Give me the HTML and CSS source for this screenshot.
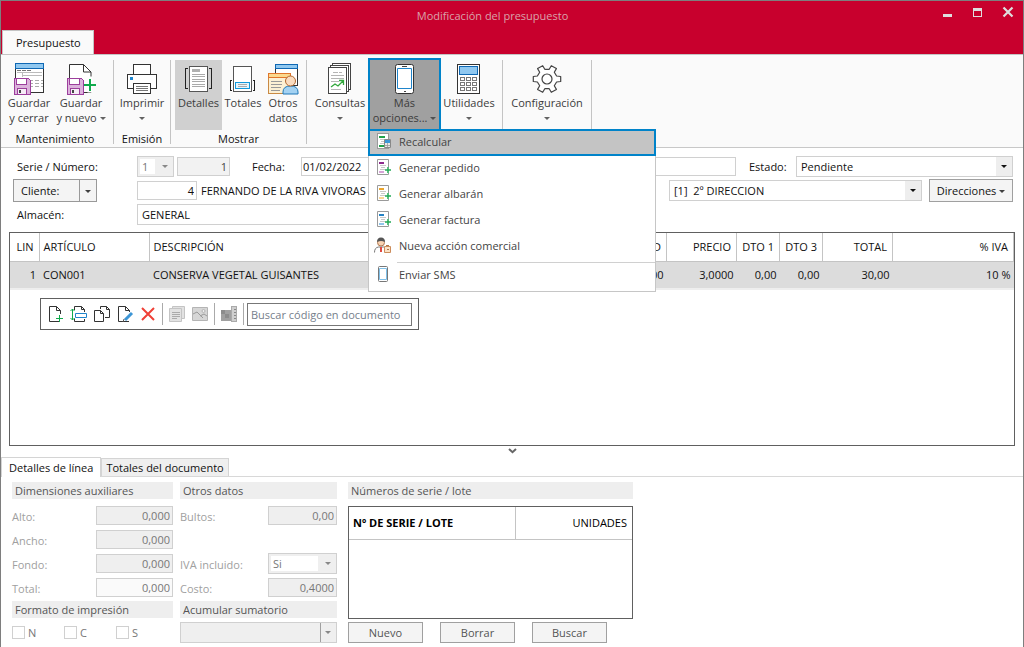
FILE: index.html
```html
<!DOCTYPE html>
<html lang="es">
<head>
<meta charset="utf-8">
<title>Modificación del presupuesto</title>
<link rel="stylesheet" href="styles.css">
</head>
<body>
<svg class="defs" width="0" height="0" aria-hidden="true">
  <defs>
    <g id="floppy">
      <path d="M1 1h14l2 2v14H1z" fill="#dcb3dc" stroke="#9c3f9c"/>
      <path d="M3.500 1h10v6h-10z" fill="#fff" stroke="#9c3f9c"/>
      <path d="M4 11h9v6H4z" fill="#f6ecf6" stroke="#9c3f9c"/>
      <path d="M6 13h2v3H6z" fill="#444"/>
    </g>
    <g id="doc">
      <path d="M1.500 .500h11v15h-11z" fill="#fff" stroke="#9a9a9a"/>
      <path d="M4 6.500h6M5 8.500h5M4 10.500h6" stroke="#c8c8c8" fill="none"/>
    </g>
    <g id="plus"><path d="M9 8h6v6H9z" fill="#fff"/><path d="M12 8v6M9 11h6" stroke="#22a955" stroke-width="1.500" fill="none"/></g>
  </defs>
</svg>
<div class="window">
  <header class="titlebar">
    <h1 class="title">Modificación del presupuesto</h1>
    <div class="winbtns">
      <button type="button" aria-label="Minimizar"><svg width="12" height="12" shape-rendering="crispEdges"><path d="M1 8h9v3H1z" fill="#dedede"/></svg></button>
      <button type="button" aria-label="Maximizar"><svg width="12" height="12" shape-rendering="crispEdges"><path d="M1 2h9v9H1zM2 5v5h7V5z" fill="#dedede" fill-rule="evenodd"/></svg></button>
      <button type="button" aria-label="Cerrar"><svg width="12" height="12"><path d="M1.500 1.500l9 9M10.500 1.500l-9 9" stroke="#dedede" stroke-width="2.200"/></svg></button>
    </div>
  </header>
  <nav class="apptabs"><button type="button" class="apptab">Presupuesto</button></nav>

  <section class="ribbon">
    <div class="group first">
      <div class="tools">
        <button type="button" class="tool w52">
          <svg width="32" height="32" shape-rendering="crispEdges">
            <path d="M2.500 6v23.500h28V6" fill="#fff" stroke="#333"/>
            <path d="M2.500.500h28v5h-28z" fill="#90c8f0" stroke="#0f68b4"/>
            <path d="M4 7.500h4M9 7.500h4M14 7.500h4" stroke="#777"/><path d="M4 9.500h25M9.500 10v4M10 12.500h19" stroke="#bbb"/>
            <path d="M16 17.500h14M16 20.500h14M16 23.500h14" stroke="#aaa" stroke-dasharray="4 2"/>
            <use href="#floppy" y="14"/>
          </svg><span>Guardar<br>y cerrar</span></button>
        <button type="button" class="tool w52">
          <svg width="32" height="32">
            <path d="M4.500 30V1.500h14l7.500 7.500v20.500H17" fill="#fff" stroke="#333"/>
            <path d="M18.500 1.500V9H26" fill="none" stroke="#333"/>
            <use href="#floppy" x="1" y="14" shape-rendering="crispEdges"/>
            <path d="M24 15h2v13h-2z" fill="#fff" stroke="#fff" stroke-width="3"/>
            <path d="M19 22h12M25 16v12" stroke="#10aa4c" stroke-width="2"/>
          </svg><span>Guardar<br>y nuevo <i class="caret"></i></span></button>
      </div>
      <h2 class="glabel">Mantenimiento</h2>
    </div>
    <div class="group narrow">
      <div class="tools">
        <button type="button" class="tool w52">
          <svg width="32" height="32" shape-rendering="crispEdges">
            <path d="M7.500 11V1.500h17V11M7.500 25.500h-6v-14h29v14h-6" fill="#fff" stroke="#333"/>
            <path d="M7.500 20.500h17v10h-17z" fill="#fff" stroke="#333"/>
            <path d="M10 23.500h12M10 25.500h12M10 27.500h12" stroke="#777"/>
            <path d="M4 14h3v3H4z" fill="#1e86cf"/>
          </svg><span>Imprimir<br><i class="caret"></i></span></button>
      </div>
      <h2 class="glabel">Emisión</h2>
    </div>
    <div class="group mid">
      <div class="tools">
        <button type="button" class="tool w47 pressed">
          <svg width="32" height="32" shape-rendering="crispEdges">
            <path d="M6.500 3.500h18v25h-18z" fill="#fff" stroke="#555"/>
            <path d="M9 6h8v3H9z" fill="#b0b0b0"/>
            <path d="M9 11.500h13M9 13.500h13M9 16.500h13M9 18.500h13M9 21.500h13M9 23.500h13" stroke="#aaa"/>
            <path d="M5 5.500H2.500v20H5M26 5.500h2.500v20H26" fill="none" stroke="#222"/>
          </svg><span>Detalles</span></button>
        <button type="button" class="tool w42">
          <svg width="32" height="32" shape-rendering="crispEdges">
            <path d="M6.500 3.500h18v25h-18z" fill="#fff" stroke="#555"/>
            <path d="M8.500 19.500h14v6h-14z" fill="#e4f4fc" stroke="#1198db"/>
            <path d="M11 21.500h9M11 23.500h9" stroke="#aaa"/>
            <path d="M5 17.500H3.500v10H5M26 17.500h1.500v10H26" fill="none" stroke="#222"/>
          </svg><span>Totales</span></button>
        <button type="button" class="tool w38">
          <svg width="32" height="32">
            <g shape-rendering="crispEdges"><path d="M8.500 5v17.500h22V5" fill="#fff" stroke="#333"/><path d="M8.500 1.500h22v4h-22z" fill="#90c8f0" stroke="#0f68b4"/>
            <path d="M1.500 14v16.500h22V14" fill="#fcf0d4" stroke="#c98a44"/><path d="M1.500 10.500h22v4h-22z" fill="#fbd98e" stroke="#e0762b"/>
            <path d="M4 18.500h11M4 21.500h11M4 24.500h10M4 27.500h9" stroke="#999"/></g>
            <path d="M16 31v-2q0-6 7.500-6t7.500 6v2z" fill="#a4d2f2" stroke="#2079b8"/>
            <circle cx="23.500" cy="18" r="5" fill="#fadcc0" stroke="#b2682f"/>
          </svg><span>Otros<br>datos</span></button>
      </div>
      <h2 class="glabel">Mostrar</h2>
    </div>
    <div class="group">
      <div class="tools">
        <button type="button" class="tool w56">
          <svg width="32" height="32">
            <g fill="#fff" stroke="#444" shape-rendering="crispEdges"><path d="M8.500.500h18v26h-18z"/><path d="M6.500 2.500h18v26h-18z"/><path d="M4.500 4.500h18v26h-18z"/>
            <path d="M9 9.500h5M15 9.500h3M7 12.500h13M7 15.500h13M7 18.500h8M7 26.500h10" stroke="#b5b5b5"/></g>
            <path d="M7 24l4-3 3 2 5-5M15 17.500h4.500V22" fill="none" stroke="#32a83c" stroke-width="1.300"/>
          </svg><span>Consultas<br><i class="caret"></i></span></button>
        <div class="dropdown">
          <button type="button" class="tool open" aria-expanded="true">
            <svg width="32" height="32">
              <rect x="6.500" y="1.500" width="18" height="29" rx="2" fill="#fff" stroke="#333"/>
              <path d="M8.500 5.500h14v20h-14z" fill="#fff" stroke="#2085cb"/>
              <path d="M13 3.500h5M15 28.500h2" stroke="#444"/>
            </svg><span>Más<br>opciones... <i class="caret"></i></span></button>
          <ul class="menu">
            <li><button type="button" class="item current">
              <svg width="17" height="17"><use href="#doc" shape-rendering="crispEdges"/><path d="M3 3h6v2H3zM3 12h5v2H3z" fill="#22a34a"/><path d="M8.500 6.500h6v8h-6z" fill="#e8e8e8" stroke="#888"/><path d="M9 7h5v3H9z" fill="#3c97d6"/><path d="M11.500 10v4M9 12.500h5" stroke="#999" stroke-width=".8"/></svg>Recalcular</button></li>
            <li><button type="button" class="item"><svg width="17" height="17"><use href="#doc"/><path d="M3 3h5v2H3z" fill="#8d2a8d"/><path d="M3 12h5v2H3z" fill="#d7a3d7"/><use href="#plus"/></svg>Generar pedido</button></li>
            <li><button type="button" class="item"><svg width="17" height="17"><use href="#doc"/><path d="M3 3h5v2H3z" fill="#eba52d"/><path d="M3 12h5v2H3z" fill="#f8d696"/><use href="#plus"/></svg>Generar albarán</button></li>
            <li><button type="button" class="item"><svg width="17" height="17"><use href="#doc"/><path d="M3 3h5v2H3z" fill="#2482c4"/><path d="M3 12h5v2H3z" fill="#90c5ea"/><use href="#plus"/></svg>Generar factura</button></li>
            <li><button type="button" class="item"><svg class="person" width="19" height="17"><path d="M.500 15.500q0-5 4-5.500h5q3 .500 3 3" fill="#fff" stroke="#777"/><path d="M6 10h2v5H6z" fill="#e04a43"/><circle cx="7" cy="5.500" r="3.500" fill="#f8d2b2" stroke="#b17a52"/><path d="M3 5q0-4.500 4-4.500T11 5Q7 3 3 5z" fill="#555"/><path d="M10.500 9.500h6v6h-6z" fill="#fbe2c8" stroke="#cc8d5c"/><path d="M12 8.500h3M13 12.500h2" stroke="#b1784c"/></svg>Nueva acción comercial</button></li>
            <li class="last"><button type="button" class="item"><svg width="17" height="17"><rect x="2.500" y=".500" width="9" height="15" rx="1" fill="#fff" stroke="#777"/><path d="M3.500 2.500h7v11h-7z" fill="#fff" stroke="#80c0e8"/></svg>Enviar SMS</button></li>
          </ul>
        </div>
        <button type="button" class="tool w56">
          <svg width="32" height="32" shape-rendering="crispEdges">
            <path d="M4.500 1.500h22v29h-22z" fill="#fff" stroke="#333"/><path d="M6.500 3.500h18v8h-18z" fill="#90c8f0" stroke="#0f68b4"/>
            <g fill="#fff" stroke="#777"><path d="M7.500 14.500h4v3h-4zM13.500 14.500h4v3h-4zM19.500 14.500h4v3h-4zM7.500 19.500h4v3h-4zM13.500 19.500h4v3h-4zM19.500 19.500h4v3h-4zM7.500 24.500h4v3h-4zM13.500 24.500h4v3h-4zM19.500 24.500h4v3h-4z"/></g>
          </svg><span>Utilidades<br><i class="caret"></i></span></button>
      </div>
    </div>
    <div class="group">
      <div class="tools">
        <button type="button" class="tool w78">
          <svg width="32" height="32" fill="#fff" stroke="#444" stroke-width="1.200" stroke-linejoin="round">
            <path d="M29.700 13.500v5l-4.100.500-2.300 3.800 2.100 3.600-5.100 2.900-2.100-3.600h-4.400l-2.100 3.600-5.100-2.900 2.100-3.600L6.400 19l-4.100-.500v-5l4.100-.500 2.300-3.800-2.100-3.600 5.100-2.900 2.100 3.600h4.400l2.100-3.600 5.100 2.900-2.100 3.600 2.300 3.800z"/>
            <circle cx="16" cy="16" r="5"/>
          </svg><span>Configuración<br><i class="caret"></i></span></button>
      </div>
    </div>
  </section>

  <form class="head">
    <div class="row">
      <label class="lbl" for="serie">Serie / Número:</label>
      <span class="sel off serie"><select id="serie" disabled><option>1</option></select></span>
      <input class="num ro numero" value="1" aria-label="Número" readonly>
      <label class="lblfecha" for="fecha">Fecha:</label>
      <input id="fecha" class="fecha" value="01/02/2022">
      <input class="grow" aria-label="Referencia">
      <label class="lblestado" for="estado">Estado:</label>
      <span class="sel estado"><select id="estado"><option>Pendiente</option></select></span>
    </div>
    <div class="row">
      <div class="split"><button type="button">Cliente:</button><button type="button" aria-label="Opciones de cliente"><i class="caret"></i></button></div>
      <input class="num cliente" value="4" aria-label="Código de cliente">
      <span class="name grow">FERNANDO DE LA RIVA VIVORAS</span>
      <span class="sel direccion"><select aria-label="Dirección"><option>[1]&nbsp; 2º DIRECCION</option></select></span>
      <button type="button" class="btn direcciones">Direcciones <i class="caret"></i></button>
    </div>
    <div class="row">
      <label class="lbl" for="almacen">Almacén:</label>
      <input id="almacen" class="almacen" value="GENERAL">
    </div>
  </form>

  <section class="lines">
    <table class="grid">
      <colgroup><col class="c29"><col class="c110"><col><col class="c70"><col class="c70"><col class="c43"><col class="c43"><col class="c70"><col class="c121"></colgroup>
      <thead><tr><th class="r">LIN</th><th>ARTÍCULO</th><th>DESCRIPCIÓN</th><th class="r">UNIDAD</th><th class="r">PRECIO</th><th class="r">DTO 1</th><th class="r">DTO 3</th><th class="r">TOTAL</th><th class="r">% IVA</th></tr></thead>
      <tbody><tr><td class="r">1</td><td>CON001</td><td>CONSERVA VEGETAL GUISANTES</td><td class="r">10,00</td><td class="r">3,0000</td><td class="r">0,00</td><td class="r">0,00</td><td class="r">30,00</td><td class="r">10 %</td></tr></tbody>
    </table>
    <div class="linebar">
      <button type="button" aria-label="Nueva línea"><svg width="18" height="18" fill="none" stroke="#333"><path d="M12 16.500H2.500v-15h7l4 4V9M9.500 1.500v4h4"/><path d="M12.500 10v7M9 13.500h7" stroke="#10aa4c"/></svg></button>
      <button type="button" aria-label="Insertar línea"><svg width="18" height="18" fill="none" stroke="#333"><path d="M4.500 5V1.500h7l3 3V7M11.500 1.500v3h3M4.500 13.500v3h10V14"/><path d="M5.500 8.500h11v4h-11z" fill="#fff" stroke="#2085cb"/><path d="M2.500 4v11M.500 6l2-2 2 2M.500 13l2 2 2-2" stroke="#10aa4c"/></svg></button>
      <button type="button" aria-label="Copiar línea"><svg width="18" height="18" fill="#fff" stroke="#333"><path d="M7.500 4V1.500h6l3 3v8H12M13.500 1.500v3h3M1.500 5.500h6l3 3v8h-9zM7.500 5.500v3h3"/></svg></button>
      <button type="button" aria-label="Editar línea"><svg width="18" height="18" fill="none" stroke="#333"><path d="M13 16.500H2.500v-15h7l4 4V7M9.500 1.500v4h4"/><path d="M16 8l-7 7" stroke="#3d96d6" stroke-width="3"/><path d="M7 17l1-3" stroke="#555"/></svg></button>
      <button type="button" aria-label="Borrar línea"><svg width="18" height="18"><path d="M3 3l12 12M15 3L3 15" stroke="#ef4037" stroke-width="2"/></svg></button>
      <span class="vsep"></span>
      <button type="button" aria-label="Notas"><svg width="18" height="18" fill="#e2e2e2" stroke="#c4c4c4"><path d="M4.500 1.500h12v12h-12z"/><path d="M1.500 3.500h12v13h-12z"/><path d="M4 7.500h8M4 9.500h8M4 11.500h8M4 13.500h5" stroke="#aaa"/></svg></button>
      <button type="button" aria-label="Imagen"><svg width="18" height="18" fill="#d6d6d6" stroke="#b4b4b4"><path d="M1.500 2.500h15v13h-15z"/><path d="M2 9l4-2 6 6M9 11l4-2 3 2" fill="none" stroke="#999"/><circle cx="12.500" cy="6" r="1.500" fill="#eee"/></svg></button>
      <span class="vsep"></span>
      <button type="button" aria-label="Tallas y colores"><svg width="18" height="18" shape-rendering="crispEdges"><path d="M1 5h11v11H1z" fill="#a0a0a0"/><path d="M1 5h4v4H1zM5 9h4v4H5z" fill="#8c8c8c"/><path d="M11.500 1.500h5v15h-5z" fill="#cfcfcf" stroke="#aaa"/><path d="M14 4.500h2M14 7.500h2M14 10.500h2M14 13.500h2" stroke="#888"/></svg></button>
      <span class="vsep tight"></span>
      <input class="search" placeholder="Buscar código en documento" aria-label="Buscar código en documento">
    </div>
  </section>
  <div class="splitter"><svg width="9" height="6"><path d="M1 1l3.500 3.200L8 1" fill="none" stroke="#666" stroke-width="2"/></svg></div>

  <nav class="subtabs"><button type="button" class="on">Detalles de línea</button><button type="button">Totales del documento</button></nav>
  <form class="details">
    <section class="col1">
      <h3>Dimensiones auxiliares</h3>
      <div class="field"><label for="alto">Alto:</label><input id="alto" class="w77" value="0,000" disabled></div>
      <div class="field"><label for="ancho">Ancho:</label><input id="ancho" class="w77" value="0,000" disabled></div>
      <div class="field"><label for="fondo">Fondo:</label><input id="fondo" class="w77" value="0,000" disabled></div>
      <div class="field"><label for="total">Total:</label><input id="total" class="w77 light" value="0,000" disabled></div>
      <h3>Formato de impresión</h3>
      <div class="checks"><label><input type="checkbox">N</label><label><input type="checkbox">C</label><label><input type="checkbox">S</label></div>
    </section>
    <section class="col2">
      <h3>Otros datos</h3>
      <div class="field"><label for="bultos">Bultos:</label><input id="bultos" class="w69" value="0,00" disabled></div>
      <div class="field"></div>
      <div class="field"><label for="iva">IVA incluido:</label><span class="sel off w69"><select id="iva" disabled><option>Si</option></select></span></div>
      <div class="field"><label for="costo">Costo:</label><input id="costo" class="w69" value="0,4000" disabled></div>
      <h3>Acumular sumatorio</h3>
      <span class="sel off acum"><select aria-label="Acumular sumatorio" disabled><option></option></select></span>
    </section>
    <section class="col3">
      <h3>Números de serie / lote</h3>
      <div class="lots"><table class="lot"><thead><tr><th>Nº DE SERIE / LOTE</th><th class="r">UNIDADES</th></tr></thead></table></div>
      <div class="btns"><button type="button" class="btn">Nuevo</button><button type="button" class="btn">Borrar</button><button type="button" class="btn">Buscar</button></div>
    </section>
  </form>
</div>
</body>
</html>
```

FILE: styles.css
```css
* { box-sizing: border-box; }
body { margin: 0; font: 11px/15px "Open Sans", "Noto Sans", sans-serif; color: #111; background: #fff; }
button, input, select { font: inherit; color: inherit; margin: 0; padding: 0; border: 0; border-radius: 0; background: none; }
h1, h2, h3, ul { margin: 0; padding: 0; font: inherit; list-style: none; }
svg { display: block; }
.defs { position: absolute; }
.window { display: flex; flex-direction: column; min-height: 100vh; border: 1px solid #7e7e7e; border-bottom: 0; }

.titlebar { display: flex; align-items: center; height: 29px; background: #c8002d; }
.title { flex: 1; padding-left: 42px; text-align: center; color: #d9a3ab; }
.winbtns { display: flex; gap: 18px; padding: 0 9px 7px 0; }
.apptabs { display: flex; height: 24px; padding-left: 1px; background: #c8002d; }
.apptab { padding: 0 12px 0 13px; background: #fafafa; border: 1px solid #c4c4c4; border-bottom: 0; }

.ribbon { display: flex; height: 94px; padding-top: 5px; background: #fafafa; border-top: 1px solid #c4c4c4; border-bottom: 1px solid #c8c8c8; }
.group { display: flex; flex-direction: column; height: 84px; padding: 0 5px; border-right: 1px solid #c4c4c4; }
.first { padding: 0 6px 0 2px; }
.narrow { padding: 0 2px; }
.mid { padding: 0 4px; }
.tools { display: flex; }
.glabel { text-align: center; line-height: 18px; }
.tool { display: flex; flex-direction: column; align-items: center; height: 70px; padding: 3px 0 0; color: #3c3c3c; white-space: nowrap; }
.pressed { background: #d0d0d0; }
.w52 { width: 52px; }
.w47 { width: 47px; }
.w42 { width: 42px; }
.w38 { width: 38px; }
.w56 { width: 56px; }
.w78 { width: 78px; }
.caret { display: inline-block; border: solid transparent; border-width: 3px 3px 0; border-top-color: currentColor; vertical-align: 2px; opacity: .8; }
.dropdown { position: relative; width: 73px; }
.open { width: 100%; height: 72px; margin-top: -2px; background: #a0a0a0; border: 2px solid #0083c9; border-bottom: 0; }

.menu { position: absolute; z-index: 2; top: 69px; left: 0; width: 288px; padding-bottom: 4px; background: #fff; border: solid #c6c6c6; border-width: 0 1px 1px; color: #444; }
.item { display: flex; align-items: center; gap: 6px; width: 100%; height: 26px; padding: 0 0 2px 7px; }
.item .person { margin-left: -2px; }
.menu li:first-child { margin: 0 -1px -1px; }
.item.current { height: 27px; padding-left: 6px; background: #c4c4c4; border: 2px solid #0083c9; }
.last { margin-top: 3px; border-top: 1px solid #d0d0d0; border-image: linear-gradient(90deg, transparent 29px, #d0d0d0 29px) 1; }
.last .item { height: 24px; }

input, .sel { height: 19px; padding: 0 4px; border: 1px solid #d0d0d0; background: #fff; min-width: 0; }
.head { display: flex; flex-direction: column; gap: 2px; padding: 7px 10px 7px 12px; }
.row { display: flex; align-items: center; height: 22px; }
.grow { flex: 1; }
.lbl { width: 124px; padding-left: 4px; }
.num { text-align: right; padding: 0 2px; }
.ro { background: #f2f2f2; color: #444; }
.sel { position: relative; display: block; height: 21px; padding: 0; }
.sel select { display: block; width: 100%; height: 100%; padding-left: 4px; appearance: none; background: linear-gradient(90deg, transparent calc(100% - 16px), #eee 0); opacity: 1; }
.sel::after { content: ""; position: absolute; right: 5px; top: 8px; border: solid transparent; border-width: 3px 3px 0; border-top-color: #111; }
.off { background: #efefef; }
.sel.off select { color: #777; background: linear-gradient(#fff, #fff) 2px 2px / calc(100% - 20px) calc(100% - 4px) no-repeat; }
.off::after { border-top-color: #888; }
.serie { width: 37px; margin-right: 3px; }
.numero { width: 53px; }
.lblfecha { width: 71px; padding-left: 22px; }
.fecha { width: 90px; margin-right: 4px; padding: 0 1px; }
.lblestado { width: 60px; padding-left: 13px; }
.estado { width: 217px; }
.split { display: flex; width: 84px; height: 23px; margin-right: 40px; border: 1px solid #999; background: #f4f4f4; }
.split button { flex: 1; padding-left: 7px; text-align: left; }
.split button + button { flex: 0 0 17px; padding: 0; text-align: center; border-left: 1px solid #999; }
.cliente { width: 60px; }
.name { padding-left: 4px; }
.direccion { width: 253px; margin-right: 7px; }
.btn { height: 21px; border: 1px solid #a0a0a0; background: #f4f4f4; }
.direcciones { width: 84px; height: 23px; }
.almacen { width: 500px; height: 21px; }

.lines { flex: 1; margin: 0 8px; border: 1px solid #606060; }
.grid { width: 100%; border-collapse: collapse; table-layout: fixed; border-bottom: 2px solid #eee; white-space: nowrap; }
th, td { padding: 0 5px 0 4px; text-align: left; font-weight: 400; overflow: hidden; }
th { height: 28px; border-right: 1px solid #c4c4c4; border-bottom: 1px solid #c4c4c4; }
.grid td { height: 28px; padding: 0 3px 0 4px; background: #dcdcdc; }
.grid .r, .lot .r { text-align: right; }
.c29 { width: 29px; }
.c110 { width: 110px; }
.c70 { width: 70px; }
.c43 { width: 43px; }
.c121 { width: 121px; }
.linebar { display: flex; align-items: center; gap: 5px; width: fit-content; height: 32px; margin: 8px 30px; padding: 0 6px; border: 1px solid #606060; }
.vsep { width: 1px; height: 22px; background: #aaa; }
.tight { margin-right: -2px; }
.search { width: 165px; height: 23px; padding: 0 3px; border-color: #777; }
.search::placeholder { color: #76808c; }
.splitter { display: flex; justify-content: center; height: 11px; padding-top: 2px; }

.subtabs { display: flex; align-items: flex-end; height: 20px; border-bottom: 1px solid #d8d8d8; }
.subtabs button { height: 18px; padding: 0 4px; border: 1px solid #d4d4d4; border-bottom: 0; background: #efefef; }
.subtabs .on { height: 20px; margin-bottom: -1px; padding: 0 7px; background: #fff; }
.details { display: grid; grid-template-columns: 161px 164px 303px; padding: 5px 11px 0; color: #555; }
.col1, .col2, .col3 { display: flex; flex-direction: column; }
.col2 { padding-left: 7px; }
.col3 { padding: 0 7px 0 11px; }
h3 { height: 17px; padding-left: 3px; line-height: 18px; background: #eee; }
.details h3:first-child { margin-bottom: 7px; }
.field { display: flex; align-items: center; justify-content: space-between; height: 19px; margin-bottom: 5px; }
.field + h3 { margin-top: -1px; }
.field label { color: #a0a0a0; padding-top: 2px; }
.field input { padding: 0 2px; text-align: right; color: #777; background: #efefef; }
.field input.light { background: #fafafa; }
.w77 { width: 77px; }
.w69 { width: 69px; }
.checks { display: flex; height: 29px; align-items: center; }
.checks label { display: flex; align-items: center; gap: 3px; width: 52px; color: #777; }
.checks input { appearance: none; width: 13px; height: 13px; padding: 0; }
.acum { margin-top: 4px; }
.sel.acum select { background: linear-gradient(90deg, transparent calc(100% - 16px), #a0a0a0 0, #a0a0a0 calc(100% - 15px), transparent 0); }
.lots { height: 113px; border: 1px solid #606060; background: #fff; }
.lot { width: 100%; border-collapse: collapse; color: #000; }
.lot th { height: 32px; }
.lot th:first-child { width: 166px; font-weight: 700; }
.lot th.r { border-right: 0; }
.btns { display: flex; gap: 17px; margin-top: 3px; }
.btns .btn { width: 75px; }
```
